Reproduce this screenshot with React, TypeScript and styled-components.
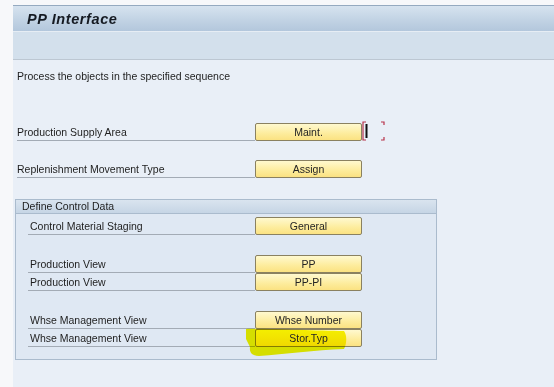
import React, { FC } from "react";
import styled, { createGlobalStyle } from "styled-components";

const GlobalStyle = createGlobalStyle`
  html, body {
    margin: 0;
    padding: 0;
    background: #f7f8fa;
  }
  body {
    font-family: "Liberation Sans", Arial, sans-serif;
  }
`;

const Page = styled.div`
  width: 554px;
  height: 387px;
  padding: 5px 0 0 13px;
  box-sizing: border-box;
  display: flex;
  flex-direction: column;
  overflow: hidden;
`;

const TitleBar = styled.div`
  height: 26px;
  box-sizing: border-box;
  border-top: 1px solid #95aac0;
  background: linear-gradient(#d6e3ef, #c2d3e4 55%, #b3c7dc);
  display: flex;
  align-items: center;
  padding-left: 14px;
`;

const Title = styled.h1`
  margin: 0;
  font-size: 14.5px;
  font-weight: bold;
  font-style: italic;
  letter-spacing: 0.6px;
  color: #151a22;
`;

const Toolbar = styled.div`
  height: 29px;
  box-sizing: border-box;
  border-top: 1px solid #e6edf4;
  border-bottom: 1px solid #bcc7d2;
  background: #d3e0ec;
`;

const Content = styled.div`
  flex: 1;
  background: #e9eff7;
  padding: 10px 0 0 4px;
  font-size: 10.5px;
  color: #1e1e1e;
`;

const Intro = styled.p`
  margin: 0 0 40px;
  line-height: 13px;
`;

const Row = styled.div`
  display: flex;
  align-items: flex-start;
  height: 18px;
`;

const Label = styled.div<{ $width: number; $indent: number }>`
  width: ${(p) => p.$width}px;
  height: 18px;
  box-sizing: border-box;
  padding-left: ${(p) => p.$indent}px;
  border-bottom: 1px solid #a3abb5;
  line-height: 18px;
`;

const Button = styled.button`
  position: relative;
  width: 107px;
  height: 18px;
  box-sizing: border-box;
  padding: 0;
  border: 1px solid #8a8160;
  border-radius: 2px;
  background: linear-gradient(#fff9cf, #fdec9c 60%, #fbe282);
  font-family: "Liberation Sans", Arial, sans-serif;
  font-size: 10.5px;
  color: #242424;
`;

const Spacer = styled.div<{ $h: number }>`
  height: ${(p) => p.$h}px;
`;

const Group = styled.div`
  margin: 21px 0 0 -2px;
  width: 422px;
  height: 161px;
  box-sizing: border-box;
  border: 1px solid #aabbcd;
  background: #dfe8f3;
`;

const GroupHeader = styled.div`
  height: 14px;
  box-sizing: border-box;
  border-bottom: 1px solid #aabbcd;
  background: linear-gradient(#d9e4ef, #c6d5e5);
  padding-left: 6px;
  line-height: 13px;
`;

const GroupBody = styled.div`
  padding: 3px 0 0 12px;
`;

const Highlight = styled.svg`
  position: absolute;
  left: -11px;
  top: -4px;
  mix-blend-mode: multiply;
  pointer-events: none;
`;

const FocusMark = () => (
  <svg width="24" height="22" viewBox="0 0 24 22" style={{ marginTop: -3 }}>
    <path d="M4 2H1V20H4" fill="none" stroke="#b8324a" strokeWidth="1.2" />
    <path d="M19 2H22V5M22 17V20H19" fill="none" stroke="#b8324a" strokeWidth="1.2" />
    <rect x="3.5" y="4" width="2" height="14" fill="#111" />
  </svg>
);

const Marker = () => (
  <Highlight width="104" height="32" viewBox="0 0 104 32">
    <path
      d="M1 3 C20 2 70 5 99 5 C102 9 102 17 99 23 C70 24 40 28 14 30 C8 30 4 27 5 21 L1 13 Z"
      fill="#f4f400"
    />
  </Highlight>
);

interface LineProps {
  label: string;
  action: string;
  width: number;
  indent?: number;
  focused?: boolean;
  marked?: boolean;
}

const Line: FC<LineProps> = ({ label, action, width, indent = 0, focused, marked }) => (
  <Row>
    <Label $width={width} $indent={indent}>
      {label}
    </Label>
    <Button>
      {marked && <Marker />}
      <span style={{ position: "relative" }}>{action}</span>
    </Button>
    {focused && <FocusMark />}
  </Row>
);

export default function App() {
  return (
    <>
      <GlobalStyle />
      <Page>
        <TitleBar>
          <Title>PP Interface</Title>
        </TitleBar>
        <Toolbar />
        <Content>
          <Intro>Process the objects in the specified sequence</Intro>
          <Line label="Production Supply Area" action="Maint." width={238} focused />
          <Spacer $h={19} />
          <Line label="Replenishment Movement Type" action="Assign" width={238} />
          <Group>
            <GroupHeader>Define Control Data</GroupHeader>
            <GroupBody>
              <Line label="Control Material Staging" action="General" width={227} indent={2} />
              <Spacer $h={20} />
              <Line label="Production View" action="PP" width={227} indent={2} />
              <Line label="Production View" action="PP-PI" width={227} indent={2} />
              <Spacer $h={20} />
              <Line label="Whse Management View" action="Whse Number" width={227} indent={2} />
              <Line label="Whse Management View" action="Stor.Typ" width={227} indent={2} marked />
            </GroupBody>
          </Group>
        </Content>
      </Page>
    </>
  );
}
